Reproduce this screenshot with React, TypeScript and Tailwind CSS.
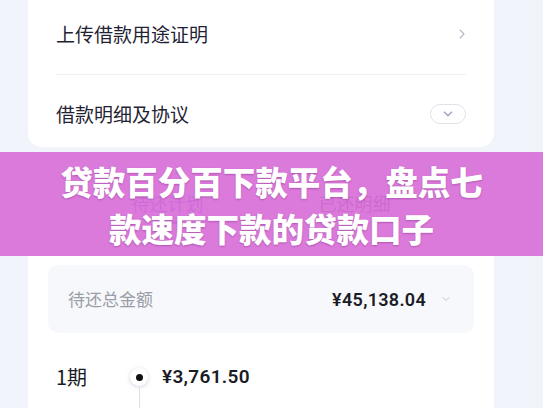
import { ChevronRight, ChevronDown } from "lucide-react";

const font = { fontFamily: '"Noto Sans CJK SC", "Noto Sans", sans-serif' };
const num = { fontFamily: 'Roboto, "Noto Sans", sans-serif' };

export default function App() {
  return (
    <div
      className="relative h-[408px] w-[543px] overflow-hidden bg-[#f1f4fb]"
      style={font}
    >
      <div className="w-[466px] ml-[28px]">
        {/* Top card */}
        <div className="rounded-b-[14px] bg-white px-[28px]">
          <div className="flex h-[68px] items-center justify-between">
            <span className="text-[19px] text-[#1f2333]">上传借款用途证明</span>
            <ChevronRight className="-mr-[4px] h-[16px] w-[16px] text-[#b4b8c4]" strokeWidth={1.6} />
          </div>
          <div className="mt-[6px] h-px bg-[#eff0f3]" />
          <div className="mt-[6px] flex h-[66px] items-center justify-between">
            <span className="text-[19px] text-[#1f2333]">借款明细及协议</span>
            <span className="flex h-[20px] w-[36px] items-center justify-center rounded-full border border-[#e0e2ea]">
              <ChevronDown className="h-[14px] w-[14px] text-[#a8acc0]" strokeWidth={3} />
            </span>
          </div>
        </div>

        {/* Repayment card */}
        <div className="mt-[26px] rounded-t-[14px] bg-white pb-4">
          <div className="flex px-[46px] pt-[17px]">
            <div className="flex flex-1 flex-col items-center">
              <span className="text-[18px] text-[#3b3fd0]">待还计划</span>
              <span className="mt-[4px] h-[3px] w-[30px] rounded-full bg-[#3b4fe0]" />
            </div>
            <div className="flex flex-1 flex-col items-center">
              <span className="text-[18px] text-[#333647]">已还明细</span>
            </div>
          </div>

          <div className="mx-[20px] mt-[41px] flex h-[68px] items-center justify-between rounded-[10px] bg-[#f7f8fb] pl-[20px] pr-[22px]">
            <span className="text-[17px] text-[#9a9ca6]">待还总金额</span>
            <div className="flex items-center gap-[14px]">
              <span className="text-[18px] font-semibold tracking-[0.3px] text-[#1a1c26]" style={num}>¥45,138.04</span>
              <ChevronDown className="h-[12px] w-[12px] text-[#c4c6cf]" strokeWidth={2} />
            </div>
          </div>

          <div className="mt-[30px] flex px-[28px]">
            <div className="flex w-[65px] flex-col">
              <span className="text-[20px] leading-[28px] text-[#1a1c26]">1期</span>
              <span className="mt-[14px] text-[14px] text-[#a0a2ab]">2024/03/05</span>
            </div>
            <div className="flex w-[36px] flex-col items-center">
              <span className="mt-[5px] flex h-[18px] w-[18px] items-center justify-center rounded-full bg-white shadow-[0_1px_4px_rgba(120,130,170,0.35)]">
                <span className="h-[7px] w-[7px] rounded-full bg-[#111]" />
              </span>
              <span className="h-[40px] w-px bg-[#dfe1e8]" />
            </div>
            <div className="flex flex-col pl-[5px]">
              <span className="text-[19px] font-semibold leading-[28px] tracking-[0.3px] text-[#1a1c26]" style={num}>¥3,761.50</span>
              <span className="mt-[14px] text-[14px] text-[#a0a2ab]">本金 ¥3,500.00　利息 ¥261.50</span>
            </div>
          </div>
        </div>
      </div>

      {/* Title banner overlay */}
      <div className="absolute left-0 top-[152px] flex h-[104px] w-[543px] flex-col items-center justify-center bg-[#d870d8]/[0.93]">
        <p className="text-center text-[32.5px] font-black leading-[47px] text-white [text-shadow:0_1px_2px_rgba(80,0,80,0.3)]">
          贷款百分百下款平台，盘点七
          <br />
          款速度下款的贷款口子
        </p>
      </div>
    </div>
  );
}
